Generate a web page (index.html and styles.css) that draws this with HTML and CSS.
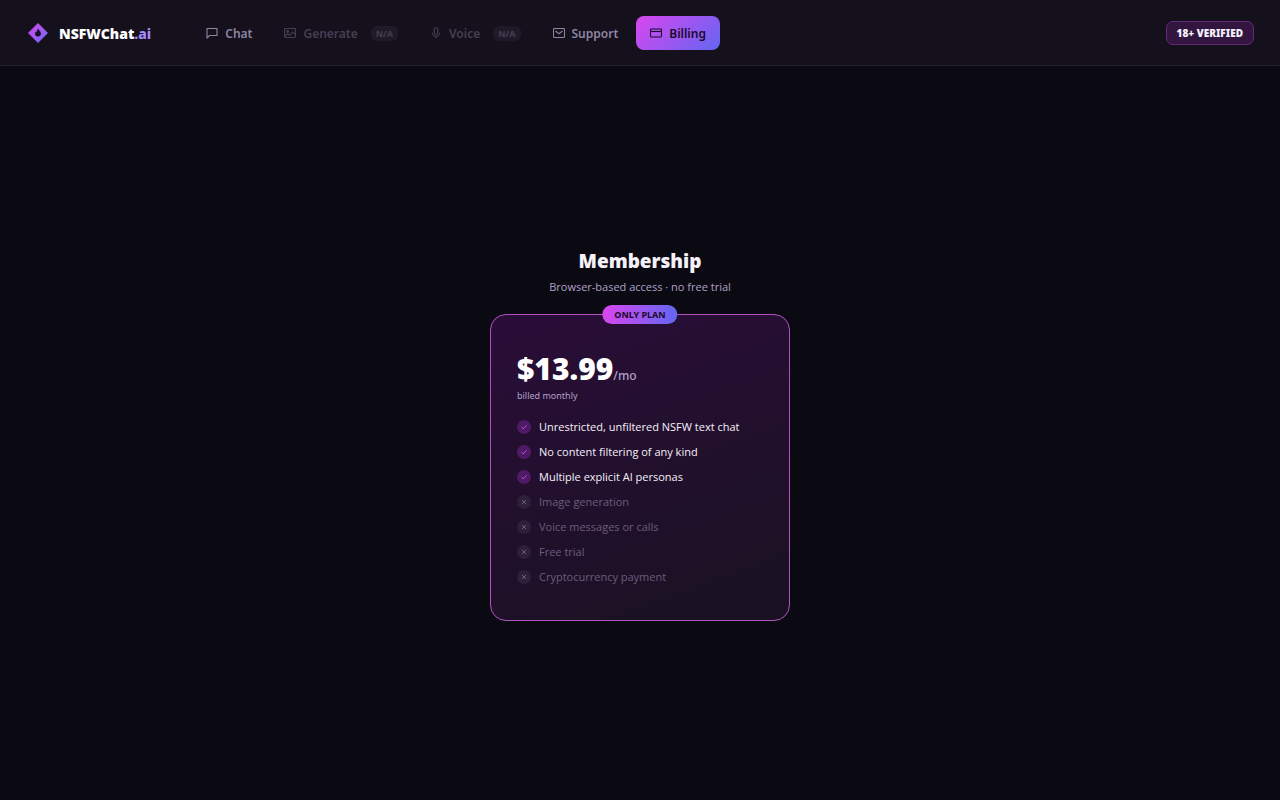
FILE: index.html
```html
<!DOCTYPE html>
<html lang="en">
<head>
    <meta charset="UTF-8">
    <meta name="viewport" content="width=device-width, initial-scale=1.0">
    <title>Billing - NSFWChat.ai</title>
    <link rel="stylesheet" href="styles.css">
</head>
<body>
    <header class="topbar">
        <a class="brand" href="#">
            <svg class="brand-mark" viewBox="0 0 20 20" aria-hidden="true">
                <defs>
                    <linearGradient id="brandFill" x1="0" y1="0" x2="1" y2="1">
                        <stop offset="0" stop-color="#d946ef"/>
                        <stop offset="1" stop-color="#6d6af8"/>
                    </linearGradient>
                </defs>
                <path d="M10 0 20 10 10 20 0 10Z" fill="url(#brandFill)"/>
                <path d="M10.200 5.600c.2 1.700 2.700 2.800 2.700 5a2.900 2.900 0 0 1-5.800 0c0-1 .4-1.700 1-2.300.1.600.4 1 .9 1.200-.1-1.500.2-2.900 1.200-3.900Z" fill="#14101c"/>
            </svg>
            <span class="brand-name">NSFWChat<span class="brand-tld">.ai</span></span>
        </a>

        <nav class="nav">
            <a class="nav-link" href="#">
                <svg class="icon" viewBox="0 0 12 12" aria-hidden="true"><path d="M1 1.500h10v7H3.500L1 11Z"/></svg>
                Chat
            </a>
            <button class="nav-link" type="button" disabled>
                <svg class="icon" viewBox="0 0 12 12" aria-hidden="true"><rect x=".5" y="1.500" width="11" height="9" rx="1"/><circle cx="3.600" cy="4.500" r=".9"/><path d="M.8 9 4 6.800l2 1.400L8.500 5l3 2.500"/></svg>
                Generate
                <span class="tag">N/A</span>
            </button>
            <button class="nav-link" type="button" disabled>
                <svg class="icon" viewBox="0 0 12 12" aria-hidden="true"><rect x="4.200" y=".8" width="3.600" height="6.400" rx="1.800"/><path d="M2.200 5.500a3.800 3.800 0 0 0 7.600 0M6 9.300v2"/></svg>
                Voice
                <span class="tag">N/A</span>
            </button>
            <a class="nav-link" href="#">
                <svg class="icon" viewBox="0 0 12 12" aria-hidden="true"><rect x=".5" y="1.500" width="11" height="9" rx="1"/><path d="m2.500 4 3.500 2.800L9.500 4"/></svg>
                Support
            </a>
            <a class="nav-link active" href="#" aria-current="page">
                <svg class="icon" viewBox="0 0 12 12" aria-hidden="true"><rect x=".5" y="2" width="11" height="8" rx="1"/><path d="M.5 4.500h11"/></svg>
                Billing
            </a>
        </nav>

        <span class="verified">18+ VERIFIED</span>
    </header>

    <main class="billing">
        <h1>Membership</h1>
        <p class="subtitle">Browser-based access · no free trial</p>

        <section class="plan">
            <span class="plan-badge">ONLY PLAN</span>
            <div class="price">$13.99<span class="per">/mo</span></div>
            <div class="cycle">billed monthly</div>
            <ul class="features">
                <li><svg class="mark" viewBox="0 0 14 14" aria-hidden="true"><path d="m4.500 7.200 1.800 1.700 3.200-3.600"/></svg>Unrestricted, unfiltered NSFW text chat</li>
                <li><svg class="mark" viewBox="0 0 14 14" aria-hidden="true"><path d="m4.500 7.200 1.800 1.700 3.200-3.600"/></svg>No content filtering of any kind</li>
                <li><svg class="mark" viewBox="0 0 14 14" aria-hidden="true"><path d="m4.500 7.200 1.800 1.700 3.200-3.600"/></svg>Multiple explicit AI personas</li>
                <li class="off"><svg class="mark" viewBox="0 0 14 14" aria-hidden="true"><path d="m4.800 4.800 4.400 4.400M9.200 4.800 4.800 9.200"/></svg>Image generation</li>
                <li class="off"><svg class="mark" viewBox="0 0 14 14" aria-hidden="true"><path d="m4.800 4.800 4.400 4.400M9.200 4.800 4.800 9.200"/></svg>Voice messages or calls</li>
                <li class="off"><svg class="mark" viewBox="0 0 14 14" aria-hidden="true"><path d="m4.800 4.800 4.400 4.400M9.200 4.800 4.800 9.200"/></svg>Free trial</li>
                <li class="off"><svg class="mark" viewBox="0 0 14 14" aria-hidden="true"><path d="m4.800 4.800 4.400 4.400M9.200 4.800 4.800 9.200"/></svg>Cryptocurrency payment</li>
            </ul>
        </section>
    </main>
</body>
</html>
```
FILE: styles.css
```css
* {
    margin: 0;
    padding: 0;
    box-sizing: border-box;
}

body {
    min-height: 100vh;
    display: flex;
    flex-direction: column;
    background: #0b0a12;
    color: #f5f0fa;
    font-family: 'Segoe UI', 'Noto Sans', 'Open Sans', sans-serif;
    font-size: 12px;
}

/* Top bar */
.topbar {
    display: flex;
    align-items: center;
    padding: 16px 26px 15px 28px;
    background: #14101c;
    border-bottom: 1px solid #24202e;
}

.brand {
    display: flex;
    align-items: center;
    gap: 11px;
    margin-right: 41px;
    color: #ffffff;
    text-decoration: none;
}

.brand-mark {
    width: 20px;
    height: 20px;
}

.brand-name {
    font-size: 14px;
    font-weight: 900;
}

.brand-tld {
    color: #a78bfa;
    font-weight: 800;
}

.nav {
    display: flex;
    gap: 4px;
}

.nav-link {
    display: flex;
    align-items: center;
    gap: 7px;
    height: 34px;
    padding: 0 14px;
    border: none;
    border-radius: 8px;
    background: none;
    color: #8f84a3;
    font-family: inherit;
    font-size: 12px;
    font-weight: 600;
    text-decoration: none;
}

.nav-link:disabled {
    opacity: 0.4;
}

.nav-link.active {
    background: linear-gradient(135deg, #d946ef, #6366f1);
    color: #190a2a;
}

.icon {
    width: 12px;
    height: 12px;
    fill: none;
    stroke: currentColor;
    stroke-width: 1.1;
    stroke-linejoin: round;
}

.tag {
    margin-left: 6px;
    padding: 0 5px;
    border-radius: 6px;
    background: #2f2a3a;
    font-size: 9px;
    font-weight: 700;
    line-height: 15px;
}

.verified {
    margin-left: auto;
    padding: 0 10px;
    border: 1px solid #65297b;
    border-radius: 7px;
    background: #321640;
    font-size: 10px;
    font-weight: 900;
    line-height: 22px;
}

/* Membership */
.billing {
    flex: 1;
    display: flex;
    flex-direction: column;
    align-items: center;
    justify-content: center;
    padding: 26px 24px 24px;
}

h1 {
    font-size: 19px;
    font-weight: 900;
    line-height: 28px;
}

.subtitle {
    margin: 3px 0 18px;
    color: #b0a0c8;
    font-family: 'Segoe UI', 'Open Sans', sans-serif;
    font-size: 11px;
    line-height: 18px;
}

.plan {
    position: relative;
    width: 100%;
    max-width: 300px;
    padding: 34px 26px 31px;
    border: 1px solid #b351c4;
    border-radius: 16px;
    background: linear-gradient(160deg, #2a0d38, #191221);
}

.plan-badge {
    position: absolute;
    top: -10px;
    left: 50%;
    padding: 0 12px;
    border-radius: 10px;
    background: linear-gradient(90deg, #d946ef, #6366f1);
    color: #190a2a;
    font-size: 9px;
    font-weight: 700;
    line-height: 19px;
    white-space: nowrap;
    transform: translateX(-50%);
}

.price {
    color: #ffffff;
    font-size: 30px;
    font-weight: 900;
    line-height: 40px;
}

.per {
    color: #b0a0c8;
    font-size: 12px;
    font-weight: 500;
    line-height: 1;
}

.cycle {
    color: #b0a0c8;
    font-size: 9px;
    line-height: 14px;
}

.features {
    margin-top: 11px;
    font-family: 'Segoe UI', 'Open Sans', sans-serif;
    font-size: 11px;
    list-style: none;
}

.features li {
    display: flex;
    align-items: center;
    gap: 8px;
    line-height: 25px;
}

.features .off {
    color: #6b5c7c;
}

.mark {
    width: 14px;
    height: 14px;
    border-radius: 50%;
    background: #4e1a66;
    fill: none;
    stroke: #b84fd8;
}

.off .mark {
    background: #2e2039;
    stroke: #6b5c7c;
}
```
